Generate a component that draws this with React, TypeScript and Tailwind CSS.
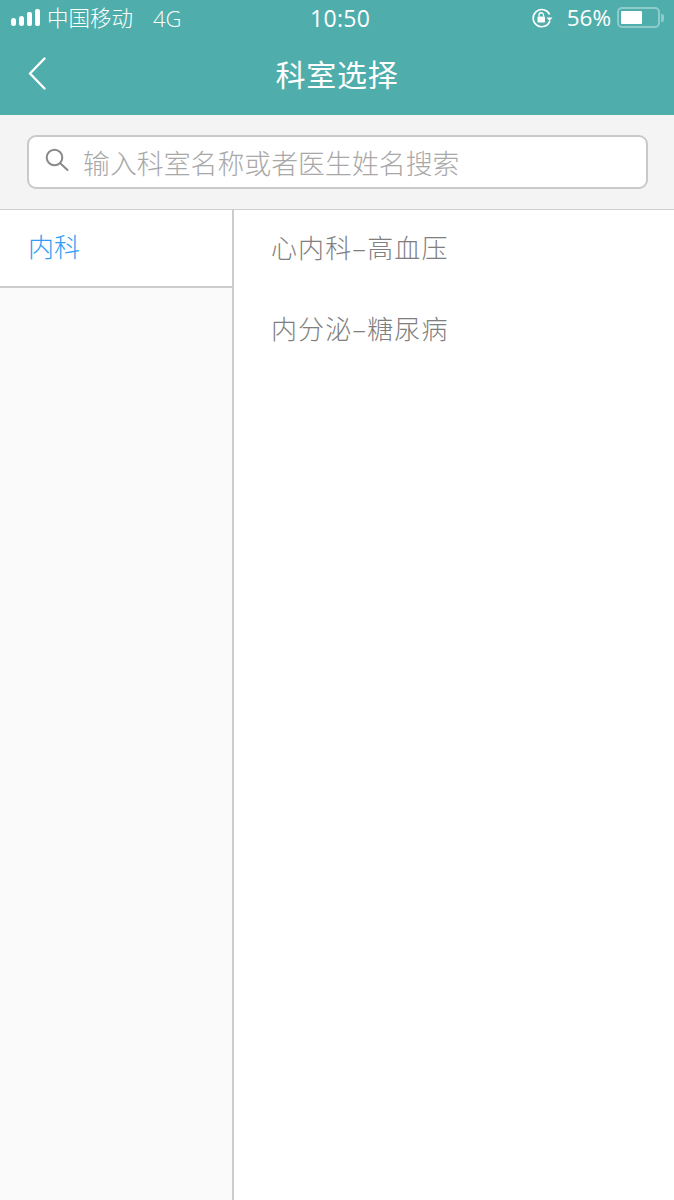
const font = "font-['Noto_Sans_CJK_SC','Noto_Sans',sans-serif]";

function StatusBar() {
  return (
    <div className="h-[38px] flex items-center justify-between pl-[11px] pr-[10px] pb-[3px] text-white relative">
      <div className="flex items-center">
        <div className="flex items-end gap-[3px] h-[18px]">
          <span className="w-[5px] h-[8px] bg-white rounded-full mb-[1px]" />
          <span className="w-[5px] h-[10px] bg-white rounded-full mb-[1px]" />
          <span className="w-[5px] h-[14px] bg-white rounded-[2px] mb-[1px]" />
          <span className="w-[5px] h-[17px] bg-white rounded-[2px] mb-[1px]" />
        </div>
        <span className="ml-[7px] -mt-[1px] text-[21.5px] font-light leading-none">中国移动</span>
        <span className="ml-[20px] text-[22px] font-['Open_Sans',sans-serif] font-light leading-none">4G</span>
      </div>
      <span className="absolute left-[310px] top-[6px] text-[23px] font-['Open_Sans',sans-serif] font-medium tracking-[0.3px] leading-[24px]">10:50</span>
      <div className="flex items-center">
        <svg width="22" height="20" viewBox="0 0 22 20" fill="none" className="mr-[14px]">
          <path d="M18.6 6.5A8.6 8.6 0 1 0 18.9 13" stroke="white" strokeWidth="1.7" />
          <path d="M15.5 9.5h6l-3 3.5z" fill="white" />
          <rect x="6.5" y="8.5" width="7.5" height="6" rx="0.7" fill="white" />
          <path d="M8 8.5V7a2.2 2.2 0 0 1 4.5 0v1.5" stroke="white" strokeWidth="1.3" />
        </svg>
        <span className="mt-[1px] text-[22.5px] font-['Open_Sans',sans-serif] font-normal leading-none">56%</span>
        <div className="ml-[6px] w-[43px] h-[21px] rounded-[5px] border-2 border-[#8ccccb] p-[2px] flex">
          <div className="w-[21px] h-full bg-white rounded-[1px]" />
        </div>
        <span className="ml-[1px] w-[3px] h-[8px] bg-[#8ccccb] rounded-r-[2px]" />
      </div>
    </div>
  );
}

export default function App() {
  return (
    <div className={`${font} w-[674px] h-[1200px] flex flex-col bg-white overflow-hidden`}>
      <header className="bg-[#4faeac] h-[115px] shrink-0">
        <StatusBar />
        <div className="h-[77px] flex items-center justify-center pb-[7px] relative text-white">
          <svg width="20" height="34" viewBox="0 0 20 34" fill="none" className="absolute left-[28px] top-[19px]">
            <path d="M16.5 1.5 2 16.5l14.5 15" stroke="white" strokeWidth="2.4" strokeLinecap="round" strokeLinejoin="round" />
          </svg>
          <h1 className="text-[30px] font-normal leading-none tracking-[0.7px]">科室选择</h1>
        </div>
      </header>

      <div className="h-[95px] shrink-0 bg-[#f4f4f4] border-b border-[#cfcfcf] pt-[20px] pl-[27px] pr-[26px]">
        <div className="h-[54px] bg-white border-2 border-[#c9c9c9] rounded-[9px] flex items-center pl-[16px]">
          <svg width="24" height="24" viewBox="0 0 24 24" fill="none" className="-mt-[5px]">
            <circle cx="9.5" cy="9.5" r="7.8" stroke="#8a8a8a" strokeWidth="2" />
            <path d="M15.5 15.5 22.5 22" stroke="#8a8a8a" strokeWidth="2" strokeLinecap="round" />
          </svg>
          <span className="ml-[14px] mt-[2px] text-[26.9px] font-light leading-none text-[#a8a8a8]">输入科室名称或者医生姓名搜索</span>
        </div>
      </div>

      <div className="flex-1 flex min-h-0">
        <aside className="w-[234px] shrink-0 bg-[#fafafa] border-r-2 border-[#cccccc]">
          <div className="h-[78px] bg-white border-b-2 border-[#cccccc] flex items-center pl-[28px] pb-[5px] text-[26px] font-light text-[#2f9df5]">内科</div>
        </aside>
        <main className="flex-1 flex flex-col pl-[37px] text-[26px] font-light tracking-[1.1px] text-[#7f7f7f]">
          <div className="h-[78px] flex items-center pb-[5px]">心内科–高血压</div>
          <div className="h-[81px] flex items-center pb-[3px]">内分泌–糖尿病</div>
        </main>
      </div>
    </div>
  );
}
